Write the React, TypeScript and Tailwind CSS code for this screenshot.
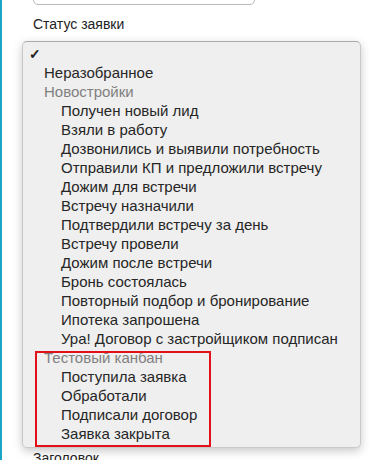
import React from "react";

type Row = { label: string; kind: "check" | "top" | "group" | "item" };

const rows: Row[] = [
  { label: "✓", kind: "check" },
  { label: "Неразобранное", kind: "top" },
  { label: "Новостройки", kind: "group" },
  { label: "Получен новый лид", kind: "item" },
  { label: "Взяли в работу", kind: "item" },
  { label: "Дозвонились и выявили потребность", kind: "item" },
  { label: "Отправили КП и предложили встречу", kind: "item" },
  { label: "Дожим для встречи", kind: "item" },
  { label: "Встречу назначили", kind: "item" },
  { label: "Подтвердили встречу за день", kind: "item" },
  { label: "Встречу провели", kind: "item" },
  { label: "Дожим после встречи", kind: "item" },
  { label: "Бронь состоялась", kind: "item" },
  { label: "Повторный подбор и бронирование", kind: "item" },
  { label: "Ипотека запрошена", kind: "item" },
  { label: "Ура! Договор с застройщиком подписан", kind: "item" },
  { label: "Тестовый канбан", kind: "group" },
  { label: "Поступила заявка", kind: "item" },
  { label: "Обработали", kind: "item" },
  { label: "Подписали договор", kind: "item" },
  { label: "Заявка закрыта", kind: "item" },
];

function MenuRow({ row }: { row: Row }) {
  if (row.kind === "check") {
    return <div className="h-[19px] pl-[6px] pt-px text-[14px] font-bold leading-[19px] text-[#222]">✓</div>;
  }
  if (row.kind === "group") {
    return <div className="h-[19px] whitespace-nowrap pl-[21px] leading-[19px] text-[#808080]">{row.label}</div>;
  }
  return (
    <div
      className={
        row.kind === "top"
          ? "h-[19px] whitespace-nowrap pl-[21px] leading-[19px] text-[#262626]"
          : "h-[19px] whitespace-nowrap pl-[38px] leading-[19px] text-[#262626]"
      }
    >
      {row.label}
    </div>
  );
}

export default function App() {
  return (
    <div
      className="relative h-[460px] w-[391px] overflow-hidden border-l-2 border-[#19a5c4] bg-white text-[14px]"
      style={{ fontFamily: '"Liberation Sans", Arial, sans-serif' }}
    >
      <div className="flex flex-col pl-[31px]">
        {/* input above, mostly scrolled out */}
        <div className="-mt-[30px] h-[35px] w-[222px] rounded-[5px] border border-[#b9b9b9] bg-white" />

        <div className="mt-[11px] leading-[17px] text-[#222]">Статус заявки</div>

        {/* open select popup */}
        <div className="-ml-[11px] mt-[8px] w-[339px] rounded-[5px] border border-[#c9c9c9] border-t-[#a9a9a9] bg-[#efefef] pb-[4px] pt-[2px] text-[15px] shadow-[0_3px_10px_rgba(0,0,0,0.22)]">
          {rows.map((r, i) => (
            <MenuRow key={i} row={r} />
          ))}
        </div>

        <div className="mt-[2px] leading-[17px] text-[#222]">Заголовок</div>
      </div>

      {/* annotation */}
      <div className="absolute left-[33px] top-[351px] h-[96px] w-[176px] border-2 border-[#e3101a]" />
    </div>
  );
}
